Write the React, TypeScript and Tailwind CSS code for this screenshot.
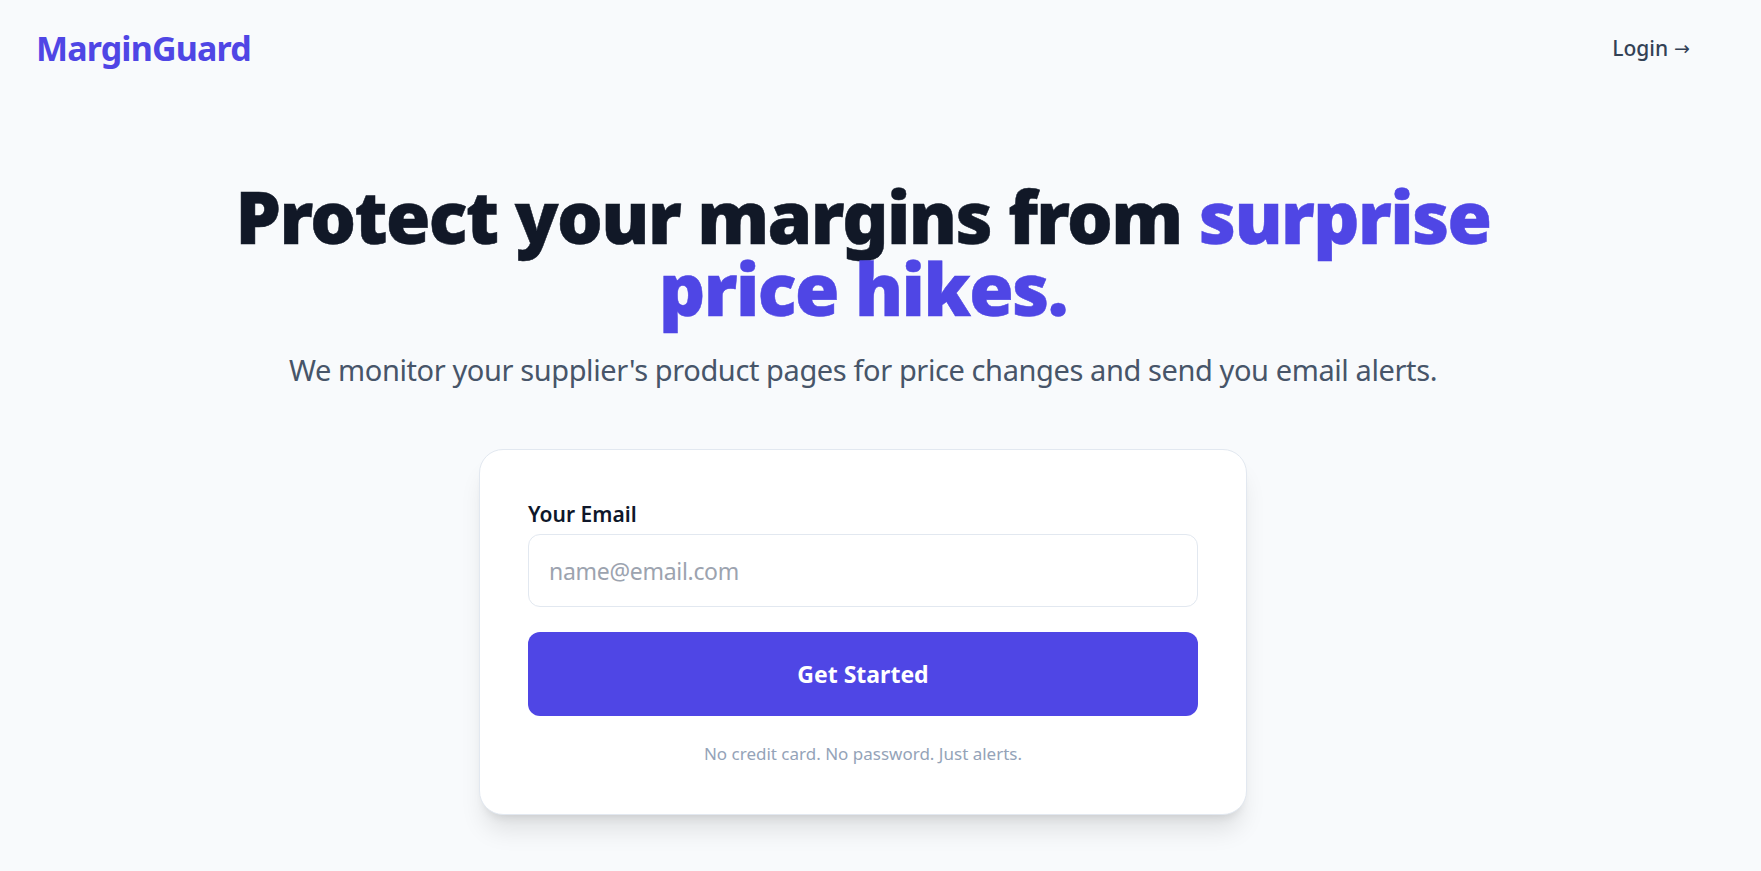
export default function App() {
  return (
    <div className="min-h-screen bg-[#f8fafc] pr-[35px] font-['Noto_Sans',sans-serif]">
      {/* Top bar */}
      <nav className="flex h-[97px] items-center justify-between px-[36px]">
        <a href="#" className="text-[34px] font-bold tracking-tight text-[#4f46e5]">
          MarginGuard
        </a>
        <a href="#" className="flex items-center gap-[6px] text-[21px] font-medium text-[#334155]">
          Login
          <span className="font-['DejaVu_Sans',sans-serif] text-[19px] font-normal">→</span>
        </a>
      </nav>

      <main className="flex flex-col items-center text-center">
        {/* Hero */}
        <h1 className="mt-[83px] text-[72px] leading-[72px] font-black tracking-[-1.6px] text-[#111827] [-webkit-text-stroke:0.5px_currentColor]">
          Protect your margins from{" "}
          <span className="text-[#4f46e5]">
            surprise
            <br />
            price hikes.
          </span>
        </h1>
        <p className="mt-[28px] text-[29px] leading-[36px] tracking-[-0.4px] text-[#475569]">
          We monitor your supplier's product pages for price changes and send you email alerts.
        </p>

        {/* Signup card */}
        <div className="mt-[61px] w-[768px] rounded-3xl border border-[#e2e8f0] bg-white px-12 pt-12 pb-[46px] text-left shadow-xl">
          <label className="mb-1 block text-[21px] leading-[32px] font-semibold text-[#0f172a]">
            Your Email
          </label>
          <input
            type="email"
            placeholder="name@email.com"
            className="block h-[73px] w-full rounded-xl border border-[#e2e8f0] bg-white px-5 text-[23px] tracking-[-0.3px] text-[#0f172a] outline-none placeholder:text-[#9ca3af]"
          />
          <button className="mt-[25px] block h-[84px] w-full rounded-xl bg-[#4f46e5] text-[23px] font-bold text-white">
            Get Started
          </button>
          <p className="mt-[24px] text-center text-[17px] leading-[28px] text-[#94a3b8]">
            No credit card. No password. Just alerts.
          </p>
        </div>
      </main>
    </div>
  );
}
